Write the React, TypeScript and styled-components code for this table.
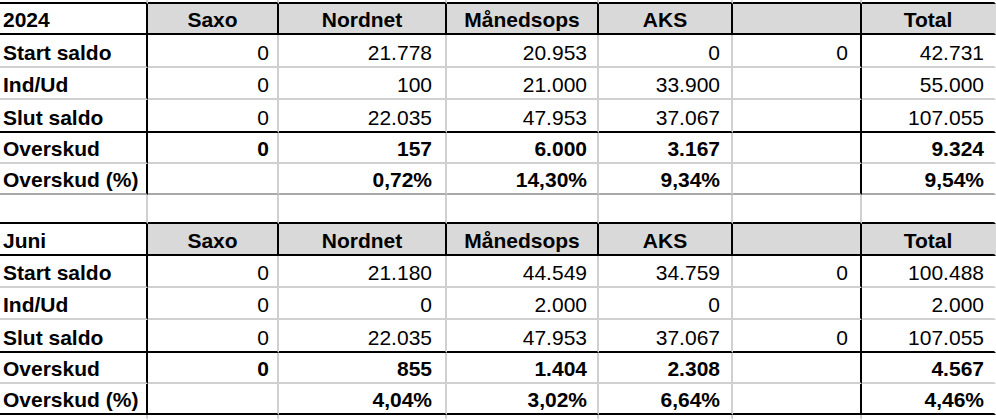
import React from 'react'
import styled, { createGlobalStyle } from 'styled-components'

const GlobalStyle = createGlobalStyle`
  body {
    margin: 0;
    background: #fff;
    font-family: 'Liberation Sans', Arial, sans-serif;
    color: #000;
  }
`

type Line = 'black' | 'gray' | 'dark' | 'none'
type Kind = 'stub' | 'header' | 'data' | 'blank'

const lineColor: Record<Line, string> = {
  black: '#000',
  gray: '#d0d0d0',
  dark: '#a8a8a8',
  none: 'transparent'
}

const Sheet = styled.div`
  display: grid;
  grid-template-columns: 148px 131px 168px 152px 134px 129px 134px;
  grid-template-rows: 4px 31px 33px 32px 33px 31px 31px 29px 32px 32px 32px 33px 31px 31px 5px;
  width: 996px;
  height: 420px;
  overflow: hidden;
`

const Cell = styled.div<{
  $right: Line
  $bottom: Line
  $fill?: boolean
  $bold?: boolean
  $align: 'left' | 'center' | 'right'
  $pad: number
}>`
  box-sizing: border-box;
  display: flex;
  align-items: flex-end;
  justify-content: ${p => (p.$align === 'left' ? 'flex-start' : p.$align === 'center' ? 'center' : 'flex-end')};
  padding: 0 ${p => (p.$align === 'right' ? p.$pad : 0)}px 1px ${p => (p.$align === 'left' ? 3 : 0)}px;
  border-right: 2px solid ${p => lineColor[p.$right]};
  border-bottom: 2px solid ${p => lineColor[p.$bottom]};
  background: ${p => (p.$fill ? '#d9d9d9' : '#fff')};
  font-size: 21px;
  line-height: 24px;
  font-weight: ${p => (p.$bold ? 700 : 400)};
  white-space: nowrap;
  overflow: hidden;
`

const pads = [0, 8, 13, 10, 11, 12, 10]
const columns = ['Saxo', 'Nordnet', 'Månedsops', 'AKS', '', 'Total']

type Row = { kind: Kind; bottom: Line; label?: string; values?: string[]; bold?: boolean }

const section = (title: string, data: string[][], last: Line): Row[] => [
  { kind: 'header', bottom: 'black', label: title, values: columns },
  { kind: 'data', bottom: 'gray', label: 'Start saldo', values: data[0] },
  { kind: 'data', bottom: 'gray', label: 'Ind/Ud', values: data[1] },
  { kind: 'data', bottom: 'black', label: 'Slut saldo', values: data[2] },
  { kind: 'data', bottom: 'gray', label: 'Overskud', values: data[3], bold: true },
  { kind: 'data', bottom: last, label: 'Overskud (%)', values: data[4], bold: true }
]

const rows: Row[] = [
  { kind: 'stub', bottom: 'black' },
  ...section(
    '2024',
    [
      ['0', '21.778', '20.953', '0', '0', '42.731'],
      ['0', '100', '21.000', '33.900', '', '55.000'],
      ['0', '22.035', '47.953', '37.067', '', '107.055'],
      ['0', '157', '6.000', '3.167', '', '9.324'],
      ['', '0,72%', '14,30%', '9,34%', '', '9,54%']
    ],
    'dark'
  ),
  { kind: 'blank', bottom: 'black' },
  ...section(
    'Juni',
    [
      ['0', '21.180', '44.549', '34.759', '0', '100.488'],
      ['0', '0', '2.000', '0', '', '2.000'],
      ['0', '22.035', '47.953', '37.067', '0', '107.055'],
      ['0', '855', '1.404', '2.308', '', '4.567'],
      ['', '4,04%', '3,02%', '6,64%', '', '4,46%']
    ],
    'black'
  ),
  { kind: 'stub', bottom: 'none' }
]

const rightLine = (kind: Kind, col: number): Line => {
  if (col === 6) return 'none'
  if (kind === 'header') return 'black'
  if (kind === 'data') return col === 0 || col === 5 ? 'black' : 'gray'
  return 'gray'
}

const App = () => {
  return (
    <>
      <GlobalStyle />
      <Sheet>
        {rows.map((row, r) =>
          [0, 1, 2, 3, 4, 5, 6].map(c => {
            const text = c === 0 ? row.label : row.values?.[c - 1]
            const isHeader = row.kind === 'header'
            return (
              <Cell
                key={`${r}-${c}`}
                $right={rightLine(row.kind, c)}
                $bottom={row.bottom}
                $fill={isHeader && c > 0}
                $bold={c === 0 || isHeader || row.bold}
                $align={c === 0 ? 'left' : isHeader ? 'center' : 'right'}
                $pad={pads[c]}
              >
                {text}
              </Cell>
            )
          })
        )}
      </Sheet>
    </>
  )
}

export default App
